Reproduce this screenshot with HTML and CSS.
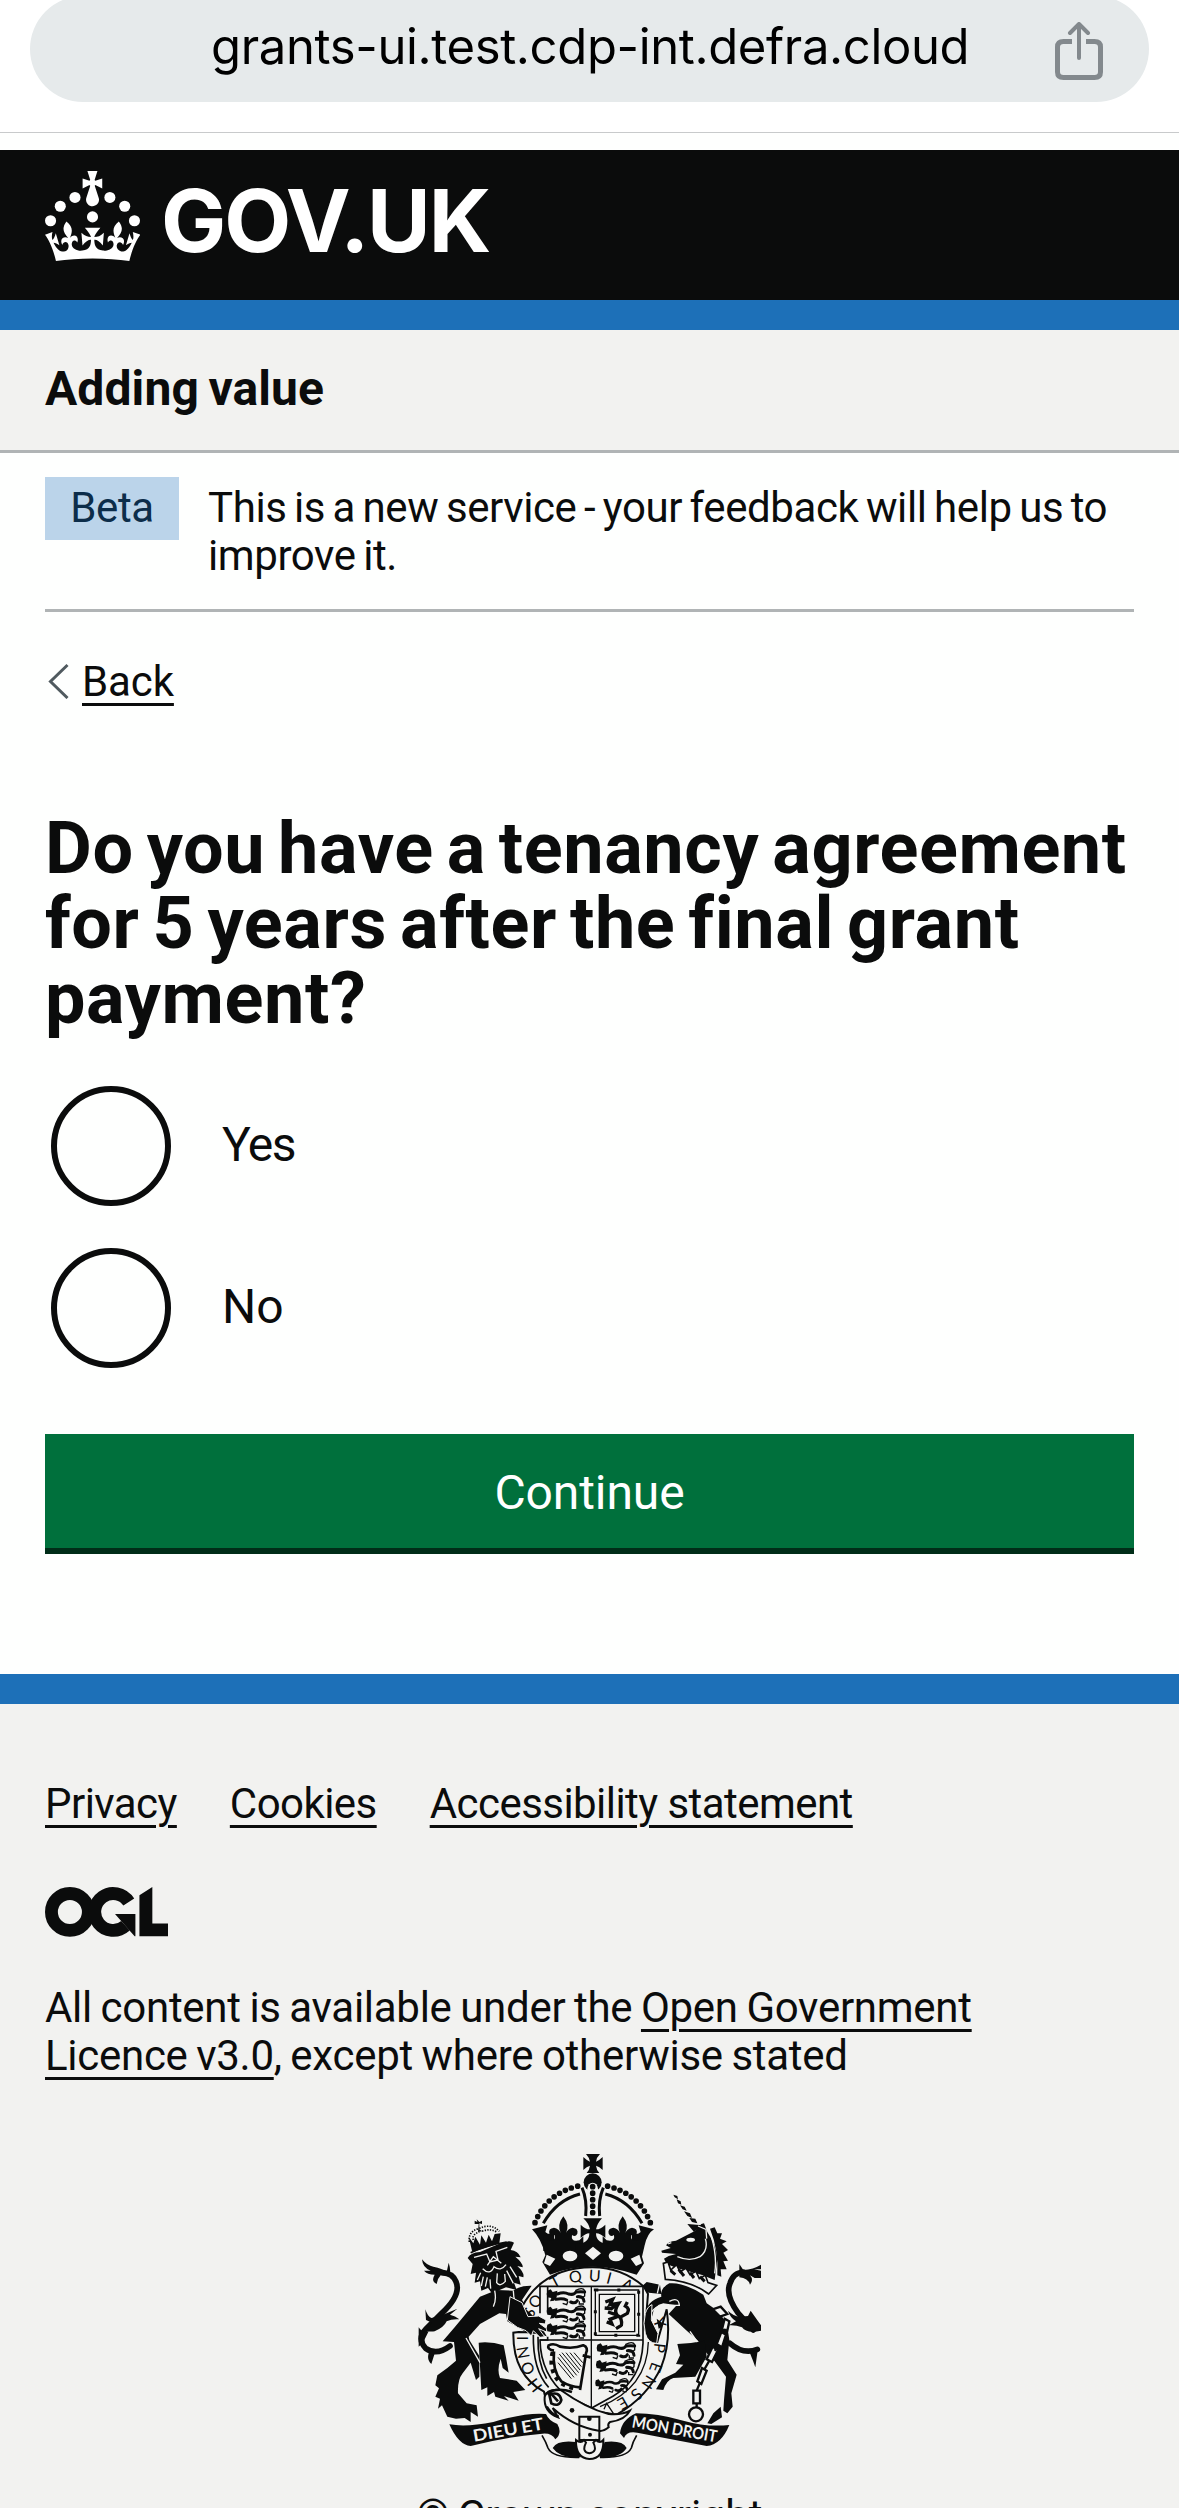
FILE: index.html
```html
<!DOCTYPE html>
<html lang="en">
<head>
<meta charset="utf-8">
<title>Do you have a tenancy agreement for 5 years after the final grant payment?</title>
<link rel="stylesheet" href="styles.css">
</head>
<body>
<div class="browser-bar">
  <div class="address">
    <span class="address-text">grants-ui.test.cdp-int.defra.cloud</span>
    <svg class="share" viewBox="0 0 48 58" width="48" height="58" fill="none" stroke="#83898d" stroke-width="5" stroke-linejoin="round">
      <path d="M17 19.500H8.500Q2.500 19.500 2.500 25V50Q2.500 55.500 8.500 55.500H39.500Q45.500 55.500 45.500 50V25Q45.500 19.500 39.500 19.500H31"/>
      <path stroke-width="4" stroke-linecap="round" d="M24 36V3M15 11L24 2L33 11"/>
    </svg>
  </div>
</div>
<header class="header">
  <svg class="crown" viewBox="0 0 63.400 60" width="95" height="90" fill="#fff" aria-hidden="true">
    <circle cx="20" cy="17.600" r="3.700"/><circle cx="10.200" cy="23.500" r="3.700"/><circle cx="3.700" cy="33.200" r="3.700"/><circle cx="31.700" cy="30.600" r="3.700"/><circle cx="43.300" cy="17.600" r="3.700"/><circle cx="53.200" cy="23.500" r="3.700"/><circle cx="59.700" cy="33.200" r="3.700"/>
    <path d="M33.1,9.8c.2-.1.3-.3.5-.5l4.6,2.4v-6.8l-4.6,1.5c-.1-.2-.3-.3-.5-.5l1.900-5.900h-6.700l1.900,5.900c-.2.1-.3.3-.5.5l-4.600-1.500v6.800l4.600-2.400c.1.2.3.3.5.5l-2.600,8c-.9,2.800,1.200,5.700,4.100,5.700h0c3,0,5.100-2.900,4.100-5.700l-2.600-8ZM37,37.900s-3.400,3.800-4.100,6.100c2.200,0,4.200-.5,6.400-2.800l-.7,8.500c-2-2.800-4.400-4.100-5.700-3.800.1,3.100.5,6.700,5.800,7.200,3.700.3,6.700-1.500,7-3.800.4-2.600-2-4.300-3.700-1.600-1.400-4.500,2.400-6.100,4.900-3.200-1.900-4.500-1.800-7.700,2.400-10.900,3,4,2.600,7.300-1.200,11.100,2.400-1.300,6.200,0,4,4.600-1.200-2.800-3.700-2.200-4.200.2-.3,1.700.7,3.700,3,4.200,1.900.3,4.700-.9,7-5.900-1.300,0-2.400.7-3.900,1.700l2.400-8c.6,2.300,1.400,3.700,2.200,4.500.6-1.600.5-2.800,0-5.300l5,1.800c-2.600,3.600-5.200,8.700-7.300,17.500-7.400-1.100-15.700-1.700-24.500-1.700h0c-8.800,0-17.100.6-24.500,1.700-2.100-8.900-4.700-13.900-7.300-17.500l5-1.800c-.5,2.500-.6,3.700,0,5.300.8-.8,1.600-2.300,2.200-4.500l2.400,8c-1.500-1-2.600-1.700-3.900-1.700,2.300,5,5.200,6.200,7,5.900,2.300-.4,3.300-2.400,3-4.200-.5-2.400-3-3.100-4.200-.2-2.200-4.600,1.600-6,4-4.600-3.700-3.700-4.200-7.100-1.200-11.100,4.200,3.200,4.300,6.400,2.400,10.900,2.500-2.800,6.300-1.300,4.900,3.200-1.800-2.700-4.100-1-3.700,1.600.3,2.300,3.300,4.100,7,3.800,5.400-.5,5.700-4.200,5.800-7.200-1.300-.2-3.700,1-5.700,3.800l-.7-8.500c2.200,2.300,4.200,2.700,6.400,2.800-.7-2.300-4.100-6.100-4.100-6.100h10.600Z"/>
  </svg>
  <span class="wordmark">GOV.UK</span>
</header>
<section class="service-nav"><span>Adding value</span></section>
<div class="phase">
  <strong class="tag">Beta</strong>
  <span class="phase-text">This is a new service - your feedback will help us to improve it.</span>
</div>
<nav class="back">
  <svg viewBox="0 0 24 36" width="24" height="36" fill="none" stroke="#505a5f" stroke-width="3"><path d="M22.500 2L5.500 18.500L22.500 35"/></svg>
  <a href="#">Back</a>
</nav>
<main class="main">
  <h1>Do you have a tenancy agreement for 5 years after the final grant payment?</h1>
  <div class="radios">
    <label class="radio"><i class="dot"></i><span>Yes</span></label>
    <label class="radio"><i class="dot"></i><span>No</span></label>
  </div>
  <button class="button" type="button">Continue</button>
</main>
<footer class="footer">
  <div class="links"><a href="#">Privacy</a><a href="#">Cookies</a><a href="#">Accessibility statement</a></div>
  <svg class="ogl" role="img" aria-label="Open Government Licence" viewBox="0 0 483 196" width="123" height="50" fill="#0b0c0c">
    <circle cx="97.800" cy="97.800" r="72.500" fill="none" stroke="#0b0c0c" stroke-width="50.500"/>
    <path fill="none" stroke="#0b0c0c" stroke-width="50.500" d="M329 59A72.500 72.500 0 1 0 316 152"/>
    <path d="M275 106H355V193.500H352L299 133ZM370.800 32.400L421.500 0V142.800H483V193.500H370.800Z"/>
  </svg>
  <p class="licence">All content is available under the <a href="#">Open Government Licence v3.0</a>, except where otherwise stated</p>
  <svg class="crest" aria-hidden="true" viewBox="54 42 1029 918" width="343" height="306" fill="#0b0c0c">
    <defs>
      <g id="passant">
        <path d="M4 6L14 2L20 10L34 6L32 26L24 36L12 38L16 28L4 26Q0 16 4 6Z"/>
        <path fill="none" stroke="#0b0c0c" stroke-width="9" stroke-linecap="round" d="M34 16Q54 8 68 16Q84 20 90 10Q104 8 116 10M30 32Q50 28 62 34M74 40Q88 46 94 36M94 24Q112 22 114 38"/>
        <path fill="none" stroke="#0b0c0c" stroke-width="4" d="M88 6Q110-6 116 6V22Q106 32 92 24M50 44L62 48L66 38M100 38V46H114"/>
      </g>
      <path id="leaf" d="M0-60Q20-34 8-10Q12-22 28-26Q46-24 42-8Q36 4 26-4Q22 18 48 12L60 0V44H-60V0L-48 12Q-22 18-26-4Q-36 4-42-8Q-46-24-28-26Q-12-22-8-10Q-20-34 0-60Z"/>
    </defs>

    <!-- tails -->
    <g fill="none" stroke="#0b0c0c" stroke-linecap="round">
      <path stroke-width="17" d="M150 618Q110 648 77 625Q50 596 78 567L125 520Q185 465 168 425Q158 400 128 398"/>
      <path stroke-width="17" d="M990 610Q1030 645 1072 628M1060 570L1015 520Q975 465 990 430Q1000 398 1030 396"/>
    </g>
    <path d="M66 358Q82 378 100 380Q128 386 140 396L146 368Q154 392 148 408L122 406Q112 416 110 432Q92 424 104 404Q82 404 72 392L92 392Q68 384 66 358ZM76 508Q82 528 94 534L120 528L172 506L150 524Q166 528 178 538Q156 536 140 544Q132 562 104 574Q90 576 78 572L96 548L78 540ZM56 562Q68 580 86 574L70 606L56 620ZM86 640L108 628L94 672Q80 660 86 640ZM1018 372L1030 390Q1060 388 1083 374V388H1062L1083 392V414H1064L1050 406Q1062 420 1050 434Q1044 414 1018 412ZM984 512Q1000 528 1020 530L1044 528L1052 512L1070 538L1083 556V572Q1040 582 1026 562Q1006 554 986 556L1008 544Q990 532 984 512ZM1050 640L1074 624L1066 682Q1060 664 1050 640Z"/>

    <!-- lion -->
    <path d="M240 470L290 450L340 452Q360 436 395 437L366 480L400 530L436 536L442 594L428 594L408 578L396 588L362 566L322 544L318 522L298 520L240 552L206 590L208 600L238 648V710L228 720L212 668L188 700Q172 720 174 760L200 790L230 796L234 830L212 816L212 846L194 834L168 836L142 830L126 796L114 806L120 776L106 770L117 745L106 736L112 706L142 684L168 662L162 606L128 604L164 562Z"/>
    <path d="M236 608Q274 604 311 616L318 652L326 698L308 684L302 656Q290 690 300 714L350 722L376 750L340 756L356 782L312 768L326 782L286 770L282 756L262 768V742L244 750Z"/>
    <path d="M203 354Q212 338 240 336L310 306Q334 300 342 308L332 330Q354 332 362 352L346 350Q370 370 368 382L352 378Q374 398 370 412L356 408L362 434L342 428L350 450L318 442L290 454L286 474L264 444L244 452L240 424L224 428L228 398L212 402L218 372Z"/>
    <g fill="none" stroke="#f2f2f0" stroke-width="4">
      <path d="M222 352L260 342L270 366L294 360L288 334L322 322M262 376L280 350L304 370M248 386Q270 408 282 380Q302 396 318 374M292 400L290 428Q300 442 316 424L314 402M330 380L350 412M320 392L340 430M242 398L232 420M250 410L244 438M262 412L256 440M270 418L272 446M284 452Q290 480 280 500M340 452Q340 492 364 500L410 540M356 530L382 566M384 532L410 566M330 486L350 510M198 594L240 668"/>
      <path stroke-width="3" d="M208 330L324 302"/>
    </g>
    <path d="M216 332L206 290L220 310L226 290L240 314L244 286L258 308L266 284L276 304L284 282L302 280L298 310L220 336ZM230 238L238 246L246 242V252L238 250V268L246 274L234 276L236 252L224 252V242L232 246Z"/>
    <path fill="none" stroke="#0b0c0c" stroke-width="5" stroke-dasharray="4 4" d="M208 306Q204 274 236 266Q274 248 298 274M220 300Q214 284 238 276M246 274Q270 264 290 276"/>
    <path fill="none" stroke="#0b0c0c" stroke-width="5" d="M212 338Q250 318 320 306"/>

    <!-- unicorn -->
    <path d="M740 426L780 434L784 462L746 458L718 446ZM736 520Q740 484 784 470Q780 444 808 430Q850 426 910 464L920 490Q970 520 982 560L988 600L982 660L1010 704L994 760L998 800L982 820L970 812L972 780L978 710L944 664L920 640L894 602L862 574L806 522L830 496L790 490Q760 496 756 530L752 580L772 608Q744 610 736 580Q724 550 736 520Z"/>
    <path d="M832 612Q876 610 914 602L920 650L886 710L820 714Q800 720 790 750L768 748L786 718L826 698L850 674L828 672L840 646ZM962 800L966 832L934 852L922 850L940 820ZM770 536L796 556L776 566Z"/>
    <path d="M784 332L812 324L798 316Q804 304 828 302L886 272L904 252L912 250L922 276Q948 314 952 356L944 420L904 404L830 384L800 372L792 356L806 348L828 342L786 338Z"/>
    <path d="M930 266L944 262L952 280L966 280L960 296L980 304L966 312L984 330L970 338L984 362L970 364L980 388L962 388L964 410L952 406Q956 330 930 266ZM862 252L908 256L882 276ZM868 234L886 236L892 250L876 246ZM852 214L870 220L876 234L862 228ZM840 196L854 200L860 212L848 208ZM830 178L842 184L844 194L834 190ZM820 164L832 168L834 178L824 172Z"/>
    <g fill="none" stroke="#f2f2f0" stroke-width="4">
      <path d="M832 350Q870 366 900 350Q926 330 916 296M894 258L918 268L920 296M804 312L814 308M808 484Q836 470 838 496H808M790 494Q764 500 752 520M892 606L870 574M784 408L772 460M934 290Q952 350 944 400"/>
    </g>
    <ellipse cx="872" cy="299" rx="13" ry="6" fill="#f2f2f0"/>
    <path fill="#f2f2f0" stroke="#0b0c0c" stroke-width="5" d="M790 370L804 366L812 390L830 374L840 396L858 384L870 404L888 394L898 416L916 406L924 428L950 436L926 462Q874 422 796 418Z"/>
    <path fill="none" stroke="#0b0c0c" stroke-width="9" d="M812 392L826 404M836 388L852 408M870 398L882 414M900 410L914 424"/>
    <g fill="#f2f2f0" stroke="#0b0c0c" stroke-width="7">
      <path d="M938 508L962 500L982 522L960 530ZM974 536L988 544L982 572L966 568ZM964 576L978 584L966 622L950 612ZM938 620L954 630L936 666L920 658ZM906 684L920 692L904 732L892 724ZM880 752H900V790H880Z"/>
      <path d="M976 566V580M958 616L944 632M928 662L912 690M900 728L890 752M890 790V804"/>
      <circle cx="888" cy="823" r="21"/>
    </g>

    <!-- garter and lettering -->
    <path fill="#f2f2f0" stroke="#0b0c0c" stroke-width="6" d="M432 755Q338 704 340 578L356 576Q410 576 434 584L410 542L366 500Q430 382 578 382Q664 382 732 440L744 462L736 560Q744 606 772 606L800 508Q814 604 784 680Q744 770 650 824L440 790Z"/>
    <g class="garter-text" text-anchor="middle">
      <text transform="translate(405 735) rotate(-128)" dy="16">H</text>
      <text transform="translate(384 684) rotate(-114)" dy="16">O</text>
      <text transform="translate(370 637) rotate(-100)" dy="16">N</text>
      <text transform="translate(368 595) rotate(-90)" dy="16">I</text>
      <text transform="translate(389 518) rotate(-64)" dy="16">S</text>
      <text transform="translate(407 484) rotate(-54)" dy="16">O</text>
      <text transform="translate(466 426) rotate(-28)" dy="16">T</text>
      <text transform="translate(526 411) rotate(-12)" dy="16">Q</text>
      <text transform="translate(584 408) rotate(4)" dy="16">U</text>
      <text transform="translate(627 415) rotate(15)" dy="16">I</text>
      <text transform="translate(682 436) rotate(28)" dy="16">A</text>
      <text transform="translate(778 548) rotate(72)" dy="16">Y</text>
      <text transform="translate(778 624) rotate(97)" dy="16">P</text>
      <text transform="translate(766 682) rotate(110)" dy="16">E</text>
      <text transform="translate(746 726) rotate(122)" dy="16">N</text>
      <text transform="translate(709 762) rotate(136)" dy="16">S</text>
      <text transform="translate(668 789) rotate(150)" dy="16">E</text>
    </g>
    <path fill="none" stroke="#0b0c0c" stroke-width="5" d="M400 584Q398 690 446 742M414 590Q412 668 440 716"/>

    <!-- forepaws over the garter -->
    <path stroke="#f2f2f0" stroke-width="3" d="M330 470L366 488L384 530L416 528L438 540L436 552L418 550L440 566V576L416 566L434 590L420 592L400 572L394 588L378 572L352 562L322 540Z"/>

    <!-- shield -->
    <path fill="#f2f2f0" stroke="#0b0c0c" stroke-width="5" d="M443 520V439H729V610Q724 720 640 768L575 804L500 768Q422 704 420 600H443V590M420 520V439H446"/>
    <path fill="none" stroke="#0b0c0c" stroke-width="4" d="M420 600H729M574 439V804M745 606Q742 744 600 800M612 808L620 790L640 820"/>
    <use href="#passant" x="438" y="446"/><use href="#passant" x="438" y="498"/><use href="#passant" x="438" y="548"/>
    <use href="#passant" x="588" y="608"/><use href="#passant" x="586" y="658"/><use href="#passant" transform="translate(584 716) scale(.85)"/>
    <g fill="none" stroke="#0b0c0c" stroke-width="4"><path d="M586 450H716V586H586ZM598 463H704V575H598Z"/><path stroke-width="9" stroke-dasharray="9 57" d="M586 450H716V586H586Z"/></g>
    <path fill="none" stroke="#0b0c0c" stroke-width="10" d="M616 486L638 478L630 494L656 490Q640 514 652 526Q668 532 664 558M650 492L634 506L614 504M648 524L624 516M652 530L630 538L636 552L620 546M664 530L682 520Q690 506 676 498L682 486M664 556L648 566"/>
    <path fill="none" stroke="#0b0c0c" stroke-width="8" d="M462 632Q440 628 446 616Q462 608 480 620Q520 628 550 616Q566 622 558 640L540 750M462 634Q456 690 484 724Q510 740 540 742M548 646L572 652"/>
    <path fill="none" stroke="#0b0c0c" stroke-width="12" stroke-dasharray="12 14" d="M458 636Q444 690 480 728Q504 742 528 746"/>
    <path fill="none" stroke="#0b0c0c" stroke-width="3" d="M474 652L522 712M478 642L530 706M486 638L536 698M498 638L540 690M510 638L544 680M522 638L548 668M474 668L514 716"/>
    <path stroke="#f2f2f0" stroke-width="3" d="M736 520Q742 500 756 494L754 540L774 580L770 610Q744 610 736 580Q728 550 736 520Z"/>

    <!-- crown -->
    <path d="M558 42H600Q589 53 588 65Q598 61 608 51V90Q598 80 588 77Q590 91 598 99H560Q568 91 570 77Q560 80 550 90V51Q560 61 570 65Q568 53 558 42Z"/>
    <circle cx="578" cy="127" r="27"/>
    <path fill="#f2f2f0" d="M562 232V146Q564 128 578 128Q592 128 594 146V232Z"/>
    <path fill="none" stroke="#0b0c0c" stroke-width="9" d="M546 143Q562 180 557 228M610 143Q594 180 599 228M430 250Q470 180 540 162M726 250Q686 180 616 162"/>
    <path fill="none" stroke="#0b0c0c" stroke-width="17" stroke-linecap="round" stroke-dasharray="0 19.500" d="M578 140V222M405 248Q440 160 535 138M751 248Q716 160 621 138"/>
    <path d="M396 268L442 256L436 276Q448 288 462 276V312Q446 300 440 304Q454 326 486 318H672Q704 326 718 304Q712 300 696 312V276Q710 288 722 276L716 256L762 268Q742 280 734 316L726 350L732 370L710 404Q640 380 578 380Q508 380 450 404L427 366L436 346Q424 296 396 268Z"/>
    <use href="#leaf" transform="translate(490 289)"/><use href="#leaf" transform="translate(668 289)"/>
    <path d="M550 235H606Q592 250 588 268Q602 268 616 254V294Q602 280 588 280Q588 312 632 312V332H526V312Q568 312 568 280Q556 280 542 294V254Q556 268 570 268Q566 250 550 235Z"/>
    <g fill="#f2f2f0"><ellipse cx="510" cy="348" rx="22" ry="16"/><ellipse cx="648" cy="348" rx="22" ry="16"/><path d="M579 320L603 340L579 360L555 340ZM440 344L466 356L450 378L432 370ZM718 344L692 356L708 378L726 370Z"/></g>

    <!-- buckle and ribbons -->
    <path fill="#f2f2f0" stroke="#0b0c0c" stroke-width="6" d="M538 830H598V900H538ZM434 770Q440 746 482 750Q560 806 626 822Q666 826 690 812Q676 840 630 846Q622 852 626 862Q608 876 596 872Q520 860 458 804L474 832Q430 816 434 770Z"/>
    <path fill="none" stroke="#0b0c0c" stroke-width="8" d="M438 762Q470 740 516 756M448 764Q478 752 484 780Q478 802 454 790ZM456 764L474 784M440 800Q454 824 476 830"/>
    <circle cx="516" cy="811" r="7"/><circle cx="568" cy="836" r="7"/><circle cx="570" cy="884" r="6"/>
    <path d="M148 853Q200 862 280 846Q380 816 438 822Q446 842 472 852Q488 880 466 898Q454 876 420 882Q310 892 212 918Q176 916 148 853ZM988 855Q920 862 850 842Q770 820 708 820Q664 840 660 880L672 894Q680 872 712 878L920 918Q964 914 988 855Z"/>
    <path fill="none" stroke="#0b0c0c" stroke-width="5" d="M426 886Q438 906 444 924Q458 954 538 952M710 886Q698 906 694 924Q680 954 600 952"/>
    <path d="M458 924Q472 900 526 906L542 952Q480 956 458 924ZM680 924Q668 900 614 906L598 952Q660 956 680 924Z"/>
    <path fill="#f2f2f0" stroke="#0b0c0c" stroke-width="6" d="M528 900Q542 912 552 900L558 908Q544 936 568 940Q594 936 580 908L588 900Q600 912 610 900Q612 956 568 957Q526 954 528 900Z"/>
    <text class="motto" transform="translate(222 905) rotate(-10)" textLength="214" lengthAdjust="spacingAndGlyphs">DIEU ET</text>
    <text class="motto" transform="translate(694 862) rotate(10)" textLength="258" lengthAdjust="spacingAndGlyphs">MON DROIT</text>
  </svg>
  <p class="copyright">© Crown copyright</p>
</footer>
</body>
</html>
```
FILE: styles.css
```css
* { box-sizing: border-box; }

body {
  margin: 0;
  height: 2508px;
  overflow: hidden;
  background: #fefffe;
  color: #0b0c0c;
  font-family: Roboto, "Liberation Sans", sans-serif;
  font-size: 42px;
  line-height: 48px;
  letter-spacing: -0.4px;
  word-spacing: -2.5px;
}

h1, p { margin: 0; }

a {
  color: inherit;
  text-decoration: underline;
  text-decoration-thickness: 3px;
  text-underline-offset: 7px;
}

.browser-bar {
  display: flow-root;
  height: 133px;
  padding: 0 30px;
  background: #fff;
  border-bottom: 1px solid #c8cacb;
}

.address {
  display: flex;
  align-items: center;
  justify-content: space-between;
  height: 106px;
  margin-top: -4px;
  padding: 0 46px 0 181px;
  border-radius: 53px;
  background: #e6eaeb;
}

.address-text {
  padding-bottom: 5px;
  color: #000;
  font-family: Inter, sans-serif;
  font-size: 49px;
  line-height: 60px;
  letter-spacing: -0.36px;
  white-space: nowrap;
}

.share { flex: none; margin-top: 3px; }

.header {
  display: flex;
  align-items: flex-start;
  gap: 21px;
  height: 180px;
  margin-top: 17px;
  padding: 21px 45px 0;
  background: #0b0c0c;
  border-bottom: 30px solid #1d70b8;
}

.wordmark {
  padding-top: 5px;
  color: #fff;
  font-family: Inter, sans-serif;
  font-weight: 700;
  font-size: 87px;
  line-height: 90px;
  letter-spacing: -2.1px;
}

.service-nav {
  height: 123px;
  padding: 29px 45px;
  background: #f2f2f0;
  border-bottom: 3px solid #b0b4b5;
  font-size: 48px;
  font-weight: 700;
  line-height: 60px;
  letter-spacing: 0.1px;
}

.phase {
  display: flex;
  align-items: flex-start;
  gap: 29px;
  margin: 24px 45px 0;
  padding-bottom: 29px;
  border-bottom: 3px solid #b0b4b5;
}

.tag {
  flex: none;
  width: 134px;
  padding: 7px 0 8px;
  background: #bbd4ea;
  color: #0c2d4a;
  font-weight: 400;
  text-align: center;
}

.phase-text { padding-top: 7px; }

.back {
  display: flex;
  align-items: flex-start;
  gap: 13px;
  margin: 46px 45px 0;
}

.back svg { margin-top: 5px; }
.back a { letter-spacing: -0.1px; }

.main { padding: 105px 45px 0; }

h1 {
  font-size: 72px;
  line-height: 75px;
  letter-spacing: 0.6px;
  word-spacing: -5.5px;
}

.radios {
  display: grid;
  gap: 42px;
  padding: 50px 6px 0;
}

.radio {
  display: flex;
  align-items: center;
  gap: 51px;
  font-size: 48px;
  line-height: 60px;
  letter-spacing: -1.5px;
}

.radio + .radio { letter-spacing: 0; }

.radio span { padding-bottom: 2px; }

.dot {
  width: 120px;
  height: 120px;
  border: 6px solid #0b0c0c;
  border-radius: 50%;
}

.button {
  display: block;
  width: 100%;
  height: 114px;
  margin-top: 66px;
  padding: 3px 0 0;
  border: 0;
  background: #00703c;
  box-shadow: 0 6px 0 #002d18;
  color: #fff;
  font: inherit;
  font-size: 48px;
  line-height: 57px;
  letter-spacing: -0.1px;
}

.footer {
  height: 834px;
  margin-top: 126px;
  padding: 76px 45px 0;
  border-top: 30px solid #1d70b8;
  background: #f2f2f0;
}

.links { display: flex; gap: 53px; letter-spacing: -0.55px; word-spacing: 0; }

.ogl { display: block; margin-top: 59px; }

.licence {
  max-width: 1000px;
  margin-top: 47px;
  letter-spacing: -0.28px;
  word-spacing: -1.5px;
}

.crest { display: block; margin: 74px auto 0 373px; }

.copyright {
  margin-top: 32px;
  letter-spacing: 0.2px;
  text-align: center;
}

.garter-text {
  font-family: Lato, sans-serif;
  font-size: 48px;
  letter-spacing: 0;
}

.motto {
  fill: #f2f2f0;
  font-family: Lato, sans-serif;
  font-size: 50px;
  font-weight: 700;
  letter-spacing: 0;
}
```
